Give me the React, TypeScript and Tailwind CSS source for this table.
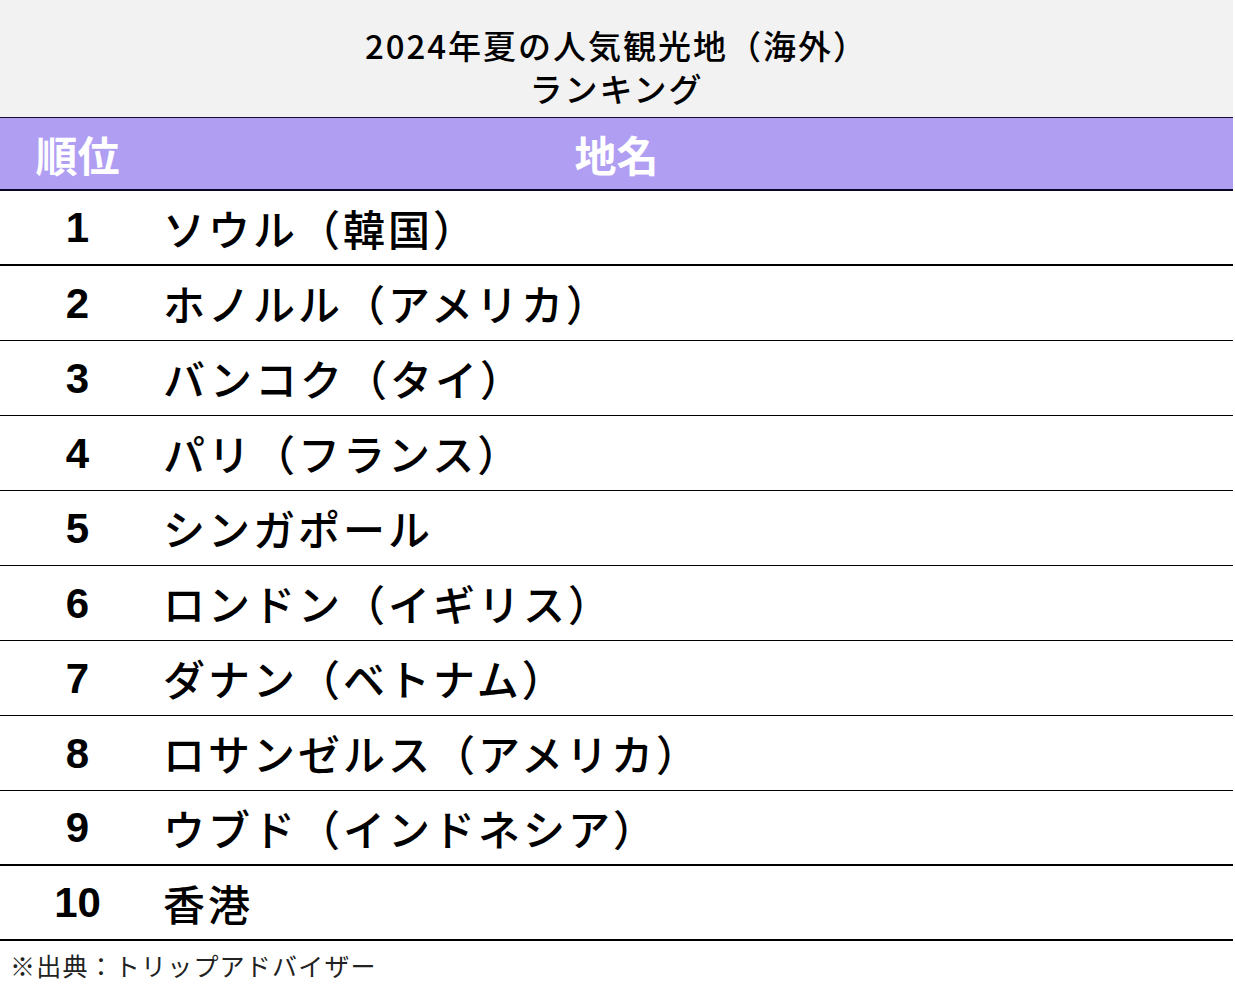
const rows = [
  { rank: "1", name: "ソウル（韓国）", thick: true },
  { rank: "2", name: "ホノルル（アメリカ）" },
  { rank: "3", name: "バンコク（タイ）" },
  { rank: "4", name: "パリ（フランス）" },
  { rank: "5", name: "シンガポール" },
  { rank: "6", name: "ロンドン（イギリス）" },
  { rank: "7", name: "ダナン（ベトナム）" },
  { rank: "8", name: "ロサンゼルス（アメリカ）" },
  { rank: "9", name: "ウブド（インドネシア）", thick: true },
  { rank: "10", name: "香港", thick: true },
];

const jp = { fontFamily: '"Noto Sans CJK JP", "Noto Sans", sans-serif' };

export default function App() {
  return (
    <div className="w-[1235px] h-[990px] bg-white text-black" style={jp}>
      <div className="w-[1233px]">
        <div className="h-[118px] bg-[#f2f2f2] border-b border-[#140c33] pt-[24px] text-center text-[33px] font-medium leading-[43px] tracking-[2px]">
          <div>2024年夏の人気観光地（海外）</div>
          <div>ランキング</div>
        </div>

        <div className="h-[73px] bg-[#b09ef3] border-b-2 border-[#0a0628] flex items-center text-white text-[42px] font-bold">
          <div className="w-[155px] text-center">順位</div>
          <div className="flex-1 text-center pr-[155px]">地名</div>
        </div>

        {rows.map((r) => (
          <div
            key={r.rank}
            className={`h-[75px] flex items-center border-black ${r.thick ? "border-b-2" : "border-b"}`}
          >
            <div
              className="w-[155px] text-center text-[42px] font-bold"
              style={{ fontFamily: '"Liberation Sans Narrow", "Liberation Sans", Arial, sans-serif' }}
            >
              {r.rank}
            </div>
            <div className="pl-[8px] text-[42px] font-medium tracking-[3px] leading-none">{r.name}</div>
          </div>
        ))}

        <div className="h-[49px] flex items-center pl-[10px] text-[25px] tracking-[1.2px] text-[#222]">
          ※出典：トリップアドバイザー
        </div>
      </div>
    </div>
  );
}
